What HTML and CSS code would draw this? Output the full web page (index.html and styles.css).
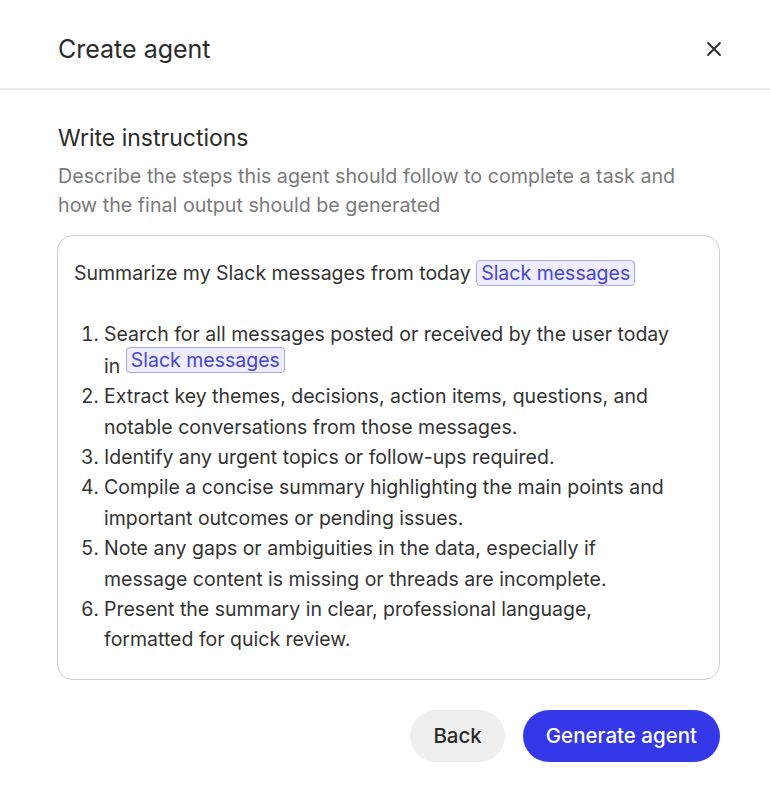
FILE: index.html
```html
<!DOCTYPE html>
<html lang="en">
<head>
<meta charset="UTF-8">
<meta name="viewport" content="width=device-width, initial-scale=1.0">
<title>Create agent</title>
<link rel="stylesheet" href="styles.css">
</head>
<body>
<div class="modal">
  <div class="header">
    <h2>Create agent</h2>
    <button class="close" aria-label="Close">
      <svg width="16" height="16" viewBox="0 0 16 16"><path d="M2 2L14 14M14 2L2 14" stroke="#2b2b2b" stroke-width="1.8" stroke-linecap="round"/></svg>
    </button>
  </div>

  <div class="content">
    <h3>Write instructions</h3>
    <p class="hint">Describe the steps this agent should follow to complete a task and how the final output should be generated</p>

    <div class="editor">
      <p class="intro">Summarize my Slack messages from today <span class="tag">Slack messages</span></p>
      <ol class="steps">
        <li>Search for all messages posted or received by the user today in <span class="tag">Slack messages</span></li>
        <li>Extract key themes, decisions, action items, questions, and notable conversations from those messages.</li>
        <li>Identify any urgent topics or follow-ups required.</li>
        <li>Compile a concise summary highlighting the main points and important outcomes or pending issues.</li>
        <li>Note any gaps or ambiguities in the data, especially if message content is missing or threads are incomplete.</li>
        <li>Present the summary in clear, professional language, formatted for quick review.</li>
      </ol>
    </div>

    <div class="actions">
      <button class="btn back">Back</button>
      <button class="btn primary">Generate agent</button>
    </div>
  </div>
</div>
</body>
</html>
```

FILE: styles.css
```css
body {
  margin: 0;
  background-color: #fff;
  font-family: Inter, "Noto Sans", Arial, sans-serif;
  color: #2e2e2e;
}

.modal {
  width: 770px;
  background-color: #fff;
}

.header {
  display: flex;
  align-items: center;
  justify-content: space-between;
  padding: 30px 48px 20px 58px;
  border-bottom: 2px solid #ececec;
}

.header h2 {
  margin: 0;
  font-size: 25px;
  font-weight: 400;
  line-height: 38px;
  color: #2b2b2b;
}

.close {
  background: none;
  border: none;
  padding: 0;
  width: 16px;
  height: 16px;
  cursor: pointer;
}

.content {
  padding: 34px 50px 0 57px;
}

h3 {
  margin: 0 0 10px 1px;
  font-size: 23px;
  font-weight: 400;
  line-height: 28px;
  color: #2b2b2b;
}

.hint {
  max-width: 630px;
  margin: 0 0 15px 1px;
  font-size: 19.7px;
  line-height: 29px;
  color: #7a7a7a;
}

.editor {
  border: 1px solid #cfcfcf;
  border-radius: 16px;
  padding: 22px 40px 24px 16px;
  font-size: 19.5px;
  line-height: 30.4px;
  color: #333;
}

.intro {
  margin: 0 0 31px 0;
}

.steps {
  margin: 0;
  padding-left: 30px;
}

.tag {
  display: inline-block;
  padding: 0 4px;
  line-height: 24px;
  color: #4545d6;
  background-color: #ededfd;
  border: 1px solid #a7a8ee;
  border-radius: 4px;
}

/* chip sits a little above the text baseline in the list */
.steps .tag {
  vertical-align: 3px;
  position: relative;
  top: -3px;
}

.actions {
  display: flex;
  justify-content: flex-end;
  gap: 18px;
  margin-top: 30px;
}

.btn {
  height: 52px;
  border: none;
  border-radius: 26px;
  font-family: Inter, "Noto Sans", Arial, sans-serif;
  font-size: 20.5px;
  font-weight: 500;
  padding: 0 23px;
  cursor: pointer;
}

.back {
  background-color: #efefef;
  color: #2b2b2b;
}

.primary {
  background-color: #3438e8;
  color: #fff;
}
```
